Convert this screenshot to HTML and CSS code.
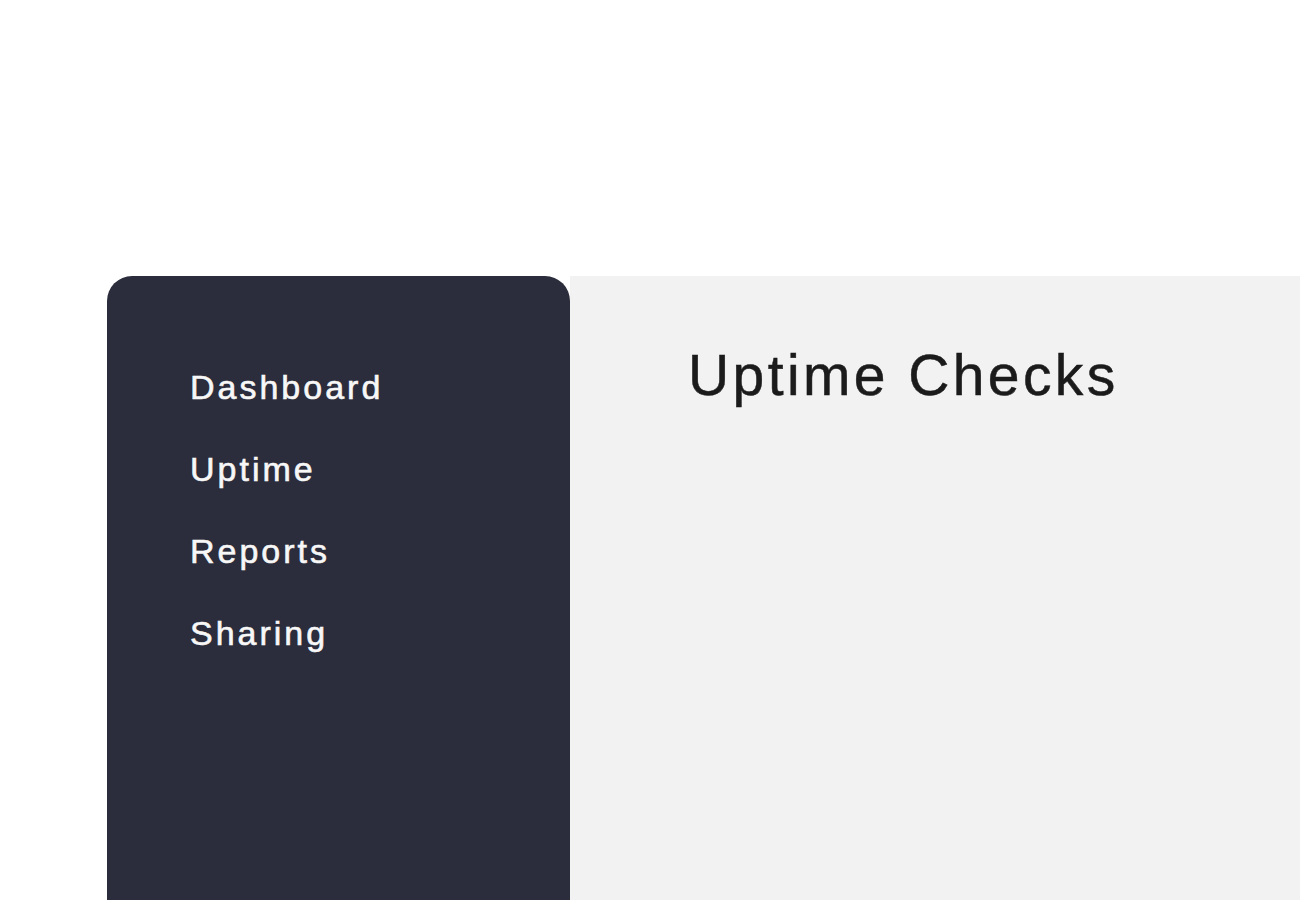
FILE: index.html
```html
<!DOCTYPE html>
<html lang="en">
<head>
<meta charset="utf-8">
<title>Uptime Checks</title>
<link rel="stylesheet" href="styles.css">
</head>
<body>
<div class="page">
  <aside class="sidebar">
    <nav class="nav">
      <a class="nav-item" href="#">Dashboard</a>
      <a class="nav-item" href="#">Uptime</a>
      <a class="nav-item" href="#">Reports</a>
      <a class="nav-item" href="#">Sharing</a>
    </nav>
  </aside>
  <main class="main">
    <h1 class="title">Uptime Checks</h1>
  </main>
</div>
</body>
</html>
```
FILE: styles.css
```css
html, body {
  margin: 0;
  padding: 0;
  background: #ffffff;
  font-family: "Liberation Sans", Arial, sans-serif;
}
.page {
  display: flex;
  padding-top: 276px;
  padding-left: 107px;
  min-height: 900px;
  box-sizing: border-box;
}
.sidebar {
  width: 463px;
  flex: none;
  background: #2c2d3c;
  border-radius: 25px 25px 0 0;
  padding: 92px 0 0 83px;
  box-sizing: border-box;
}
.nav {
  display: flex;
  flex-direction: column;
  gap: 44px;
}
.nav-item {
  color: #f7f7f7;
  text-decoration: none;
  font-size: 34px;
  line-height: 38px;
  font-weight: 400;
  letter-spacing: 3px;
  -webkit-text-stroke: 0.6px #f7f7f7;
}
.main {
  flex: 1;
  background: #f2f2f2;
  padding: 67px 0 0 118px;
}
.title {
  margin: 0;
  font-size: 57px;
  line-height: 65px;
  font-weight: 400;
  letter-spacing: 3.4px;
  color: #1b1b1b;
  -webkit-text-stroke: 0.5px #1b1b1b;
}
```
